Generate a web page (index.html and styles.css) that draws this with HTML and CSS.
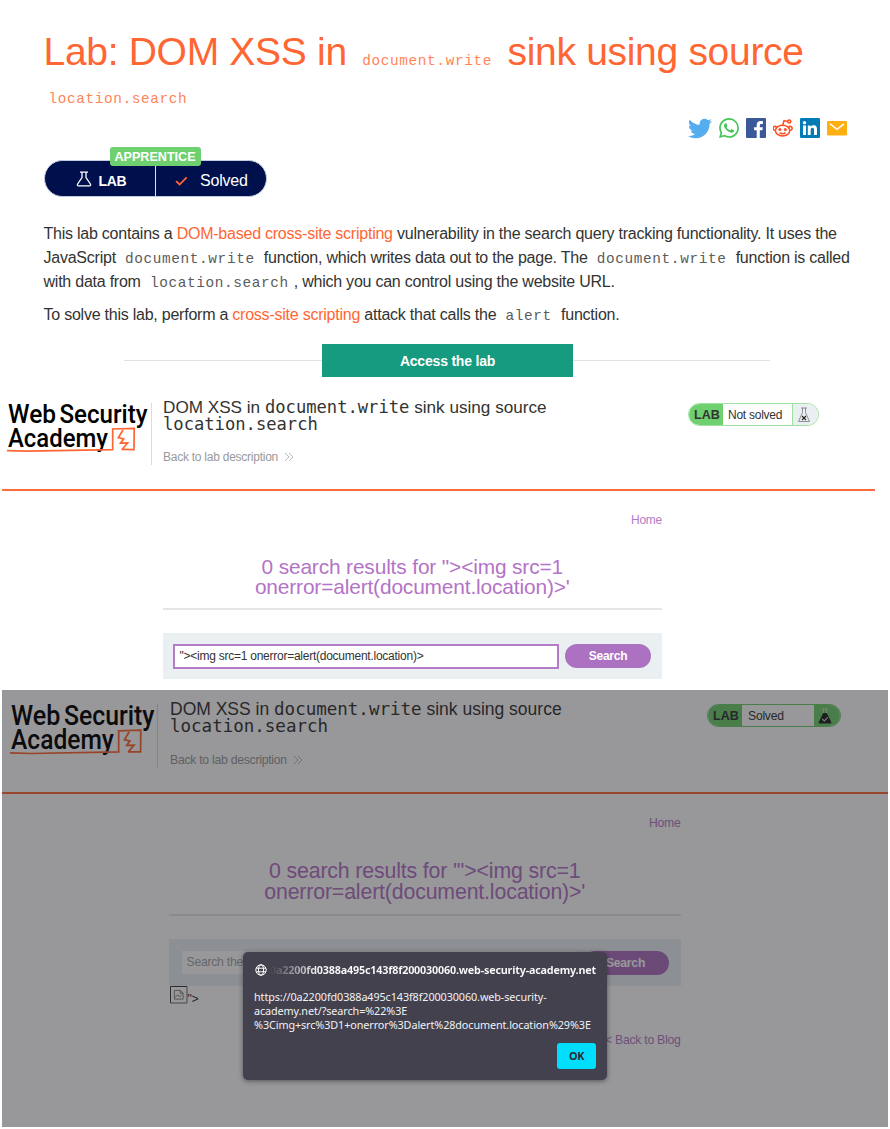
FILE: index.html
```html
<!DOCTYPE html>
<html lang="en">
<head>
<meta charset="utf-8">
<title>Lab: DOM XSS in document.write sink using source location.search</title>
<link rel="stylesheet" href="styles.css">
</head>
<body>
<section class="lab">
  <h1>Lab: DOM XSS in <code>document.write</code> sink using source<br><code>location.search</code></h1>
  <div class="share">
    <svg class="tw" viewBox="0 1.5 24 21"><path fill="#55acee" d="M23.953 4.57a10 10 0 01-2.825.775 4.958 4.958 0 002.163-2.723c-.951.555-2.005.959-3.127 1.184a4.92 4.92 0 00-8.384 4.482C7.69 8.095 4.067 6.13 1.64 3.162a4.822 4.822 0 00-.666 2.475c0 1.71.87 3.213 2.188 4.096a4.904 4.904 0 01-2.228-.616v.06a4.923 4.923 0 003.946 4.827 4.996 4.996 0 01-2.212.085 4.936 4.936 0 004.604 3.417 9.867 9.867 0 01-6.102 2.105c-.39 0-.779-.023-1.17-.067a13.995 13.995 0 007.557 2.209c9.053 0 13.998-7.496 13.998-13.985 0-.21 0-.42-.015-.63A9.935 9.935 0 0024 4.59z"/></svg>
    <svg viewBox="0 0 24 24"><path fill="#43c553" d="M17.472 14.382c-.297-.149-1.758-.867-2.03-.967-.273-.099-.471-.148-.67.15-.197.297-.767.966-.94 1.164-.173.199-.347.223-.644.075-.297-.15-1.255-.463-2.39-1.475-.883-.788-1.48-1.761-1.653-2.059-.173-.297-.018-.458.13-.606.134-.133.298-.347.446-.52.149-.174.198-.298.298-.497.099-.198.05-.371-.025-.52-.075-.149-.669-1.612-.916-2.207-.242-.579-.487-.5-.669-.51-.173-.008-.371-.01-.57-.01-.198 0-.52.074-.792.372-.272.297-1.04 1.016-1.04 2.479 0 1.462 1.065 2.875 1.213 3.074.149.198 2.096 3.2 5.077 4.487.709.306 1.262.489 1.694.625.712.227 1.36.195 1.871.118.571-.085 1.758-.719 2.006-1.413.248-.694.248-1.289.173-1.413-.074-.124-.272-.198-.57-.347m-5.421 7.403h-.004a9.87 9.87 0 01-5.031-1.378l-.361-.214-3.741.982.998-3.648-.235-.374a9.86 9.86 0 01-1.51-5.26c.001-5.45 4.436-9.884 9.888-9.884 2.64 0 5.122 1.03 6.988 2.898a9.825 9.825 0 012.893 6.994c-.003 5.45-4.437 9.884-9.885 9.884m8.413-18.297A11.815 11.815 0 0012.05 0C5.495 0 .16 5.335.157 11.892c0 2.096.547 4.142 1.588 5.945L.057 24l6.305-1.654a11.882 11.882 0 005.683 1.448h.005c6.554 0 11.89-5.335 11.893-11.893a11.821 11.821 0 00-3.48-8.413z"/></svg>
    <svg viewBox="0 0 20 20"><rect width="20" height="20" rx="1" fill="#3b5998"/><path fill="#fff" d="M13.8 20v-7.7h2.6l.4-3h-3V7.4c0-.9.3-1.5 1.5-1.5h1.6V3.2c-.3 0-1.2-.1-2.3-.1-2.3 0-3.9 1.4-3.9 4v2.2H8.1v3h2.6V20z"/></svg>
    <svg viewBox="0 0 20 20"><g fill="none" stroke="#ff4c1f" stroke-width="1.5"><ellipse cx="9.6" cy="12.6" rx="7.2" ry="5.4"/><path d="M3.6 9.4A1.900 1.900 0 1 0 1.900 12.200M15.600 9.400A1.900 1.900 0 1 1 17.300 12.200M9.800 7l1.200-4.400 4 1"/><circle cx="16.300" cy="3.600" r="1.500"/><path d="M6.600 14.600c1.700 1.300 4.400 1.300 6 0"/></g><circle cx="6.900" cy="11.400" r="1.500" fill="#ff4c1f"/><circle cx="12.300" cy="11.400" r="1.500" fill="#ff4c1f"/></svg>
    <svg viewBox="0 0 20 20"><rect width="20" height="20" rx="1.2" fill="#007bb5"/><path fill="#fff" d="M3 7.600h3V17H3zM7.800 7.600h2.800v1.300c.5-.9 1.500-1.600 2.900-1.600 3 0 3.500 2 3.500 4.500V17h-3v-4.700c0-1.100 0-2.500-1.500-2.500s-1.800 1.200-1.800 2.400V17h-2.900z"/><circle cx="4.500" cy="4.700" r="1.700" fill="#fff"/></svg>
    <svg viewBox="0 0 20 20"><rect y="3" width="20" height="14.400" rx="1.200" fill="#feb012"/><path fill="none" stroke="#fff" stroke-width="1.500" d="M3 5.800l7 5.600 7-5.600"/></svg>
  </div>
  <div class="status">
    <span class="level">APPRENTICE</span>
    <div class="status-lab">
      <svg class="flask" viewBox="0 0 16 16"><path d="M4 1.200h8M6 1.500v5L1.600 13c-.6 1 0 1.800.9 1.800h11c.9 0 1.500-.8.9-1.800L10 6.500v-5"/></svg>
      <b>LAB</b>
    </div>
    <div class="status-state">
      <svg class="tick" viewBox="0 0 14 10"><path d="M1.200 5.200l3.800 3.600 7.600-7.700"/></svg>
      <span>Solved</span>
    </div>
  </div>
  <p>This lab contains a <a>DOM-based cross-site scripting</a> vulnerability in the search query tracking functionality. It uses the<br>JavaScript <code>document.write</code> function, which writes data out to the page. The <code>document.write</code> function is called<br>with data from <code>location.search</code>, which you can control using the website URL.</p>
  <p>To solve this lab, perform a <a>cross-site scripting</a> attack that calls the <code>alert</code> function.</p>
  <div class="access"><span class="btn">Access the lab</span></div>
</section>

<section class="shot before">
  <header>
    <svg class="logo" viewBox="0 0 142 52">
      <text x="1" y="21" textLength="48" lengthAdjust="spacingAndGlyphs">Web</text>
      <text x="52.500" y="21" textLength="88" lengthAdjust="spacingAndGlyphs">Security</text>
      <text x="1" y="44.500" textLength="100" lengthAdjust="spacingAndGlyphs">Academy</text>
      <path d="M0 48.600L20 49.100L105.700 47.600L105.700 27L127.200 26.300L127 47.600L114.500 47.400"/>
      <path d="M116 28L111.300 35.700L116.600 37L113.500 41.200L120.600 41L115.400 47"/>
    </svg>
    <div class="title">
      <h2>DOM XSS in <code>document.write</code> sink using source<br><code>location.search</code></h2>
      <a>Back to lab description <svg class="chevs" viewBox="0 0 10 10"><path d="M1 1l4 4-4 4M5 1l4 4-4 4"/></svg></a>
    </div>
    <div class="pill">
      <b>LAB</b><span>Not solved</span>
      <i><svg viewBox="0 0 14 16"><path d="M4 1h6M5.500 1v4.500L1.500 14.500h11L8.500 5.500V1"/><path class="mark" d="M5 9l4 4M9 9l-4 4"/></svg></i>
    </div>
  </header>
  <main>
    <a class="home">Home</a>
    <h3>0 search results for "&gt;&lt;img src=1<br>onerror=alert(document.location)&gt;'</h3>
    <div class="search">
      <div class="field">"&gt;&lt;img src=1 onerror=alert(document.location)&gt;</div>
      <div class="go">Search</div>
    </div>
  </main>
</section>

<section class="shot after">
  <header>
    <svg class="logo" viewBox="0 0 142 52">
      <text x="1" y="21" textLength="48" lengthAdjust="spacingAndGlyphs">Web</text>
      <text x="52.500" y="21" textLength="88" lengthAdjust="spacingAndGlyphs">Security</text>
      <text x="1" y="44.500" textLength="100" lengthAdjust="spacingAndGlyphs">Academy</text>
      <path d="M0 48.600L20 49.100L105.700 47.600L105.700 27L127.200 26.300L127 47.600L114.500 47.400"/>
      <path d="M116 28L111.300 35.700L116.600 37L113.500 41.200L120.600 41L115.400 47"/>
    </svg>
    <div class="title">
      <h2>DOM XSS in <code>document.write</code> sink using source<br><code>location.search</code></h2>
      <a>Back to lab description <svg class="chevs" viewBox="0 0 10 10"><path d="M1 1l4 4-4 4M5 1l4 4-4 4"/></svg></a>
    </div>
    <div class="pill solved">
      <b>LAB</b><span>Solved</span>
      <i><svg viewBox="0 0 14 16"><path class="neck" d="M4.500 1h5M5.500 1v4.500h3V1"/><path class="full" d="M5.200 5h3.600l4.600 9.500q0 1-1 1H1.600q-1 0-1-1z"/><path class="check" d="M4.300 11l2 2 3.500-3.700"/></svg></i>
    </div>
  </header>
  <main>
    <a class="home">Home</a>
    <h3>0 search results for '"&gt;&lt;img src=1<br>onerror=alert(document.location)&gt;'</h3>
    <div class="search">
      <div class="field">Search the blog...</div>
      <div class="go">Search</div>
    </div>
    <div class="broken"><svg viewBox="0 0 18 18"><path class="frame" d="M.5 17.500V.500h17"/><path d="M17.500.5v17H.500"/><path class="pic" d="M4.500 4.500h6l3 3v6h-9zM10.500 4.500v3h3M5 12l3-3 2 2 2-1.500"/></svg>"&gt;</div>
    <a class="back">&lt; Back to Blog</a>
  </main>
  <div class="shade"></div>
  <div class="dialog">
    <div class="origin">
      <svg viewBox="0 0 12 12"><circle cx="6" cy="6" r="5.200"/><ellipse cx="6" cy="6" rx="2.500" ry="5.200"/><path d="M1.200 4.200h9.600M1.200 7.800h9.600"/></svg>
      <b>0a2200fd0388a495c143f8f200030060.web-security-academy.net</b>
    </div>
    <div class="message">https://0a2200fd0388a495c143f8f200030060.web-security-<br>academy.net/?search=%22%3E<br>%3Cimg+src%3D1+onerror%3Dalert%28document.location%29%3E</div>
    <div class="ok">OK</div>
  </div>
</section>
</body>
</html>
```
FILE: styles.css
```css
* { box-sizing: border-box; }
body {
  margin: 0;
  width: 890px;
  height: 1129px;
  overflow: hidden;
  background: #fff;
  color: #333332;
  font-family: "Liberation Sans", Arial, sans-serif;
}
svg { display: block; flex: none; }
h1, h2, h3, p { margin: 0; font-weight: 400; white-space: nowrap; }

/* Lab description */
.lab { height: 390px; padding: 32.5px 43px 0 43.5px; }
.lab h1 { font-size: 39px; letter-spacing: -.3px; line-height: 38.7px; height: 77.5px; color: #ff6633; }
.lab code {
  padding: 0 5px;
  font: 14.4px/1 "Liberation Mono", monospace;
  letter-spacing: .62px;
}
.lab h1 code { color: #ff8559; }
.lab p code { color: #5c5c5c; }
.share { display: flex; justify-content: flex-end; align-items: center; gap: 7px; height: 20px; margin-top: 8px; }
.share svg { width: 20px; height: 20px; }
.share .tw { width: 24px; height: 21px; }
.status {
  position: relative;
  display: flex;
  width: 223px;
  height: 37px;
  margin-top: 22px;
  border: 1px solid #c3cbdc;
  border-radius: 19px;
  background: #00104d;
  color: #fff;
}
.level {
  position: absolute;
  left: 65px;
  top: -14px;
  width: 91px;
  height: 19px;
  border-radius: 3px;
  background: #6fd070;
  font: bold 12.6px/20px "Liberation Sans", sans-serif;
  text-align: center;
}
.status-lab { display: flex; align-items: center; width: 111px; padding: 5px 0 0 31px; border-right: 1px solid #e0e3ee; font-size: 14px; letter-spacing: -.3px; }
.status-lab b { margin-left: 7px; }
.flask { width: 16px; height: 16px; margin-top: -4px; fill: none; stroke: #fff; stroke-width: 1.3; }
.status-state { display: flex; align-items: center; padding: 4px 0 0 19.5px; font-size: 16px; letter-spacing: -.2px; }
.tick { width: 13px; height: 10px; margin-right: 12px; fill: none; stroke: #ff6633; stroke-width: 2; }
.lab p { height: 71.5px; font-size: 16px; letter-spacing: -.235px; line-height: 23.8px; }
.lab p a { color: #ff6633; }
.status + p { margin-top: 25px; }
.lab p + p { margin-top: 9px; height: 24px; }
.access { display: flex; align-items: center; justify-content: center; width: 646px; height: 33px; margin: 17px 0 0 80.5px; background: linear-gradient(#e1e1e1, #e1e1e1) 0 16px / 100% 1px no-repeat; }
.btn { width: 251px; height: 33px; background: #169b80; color: #fff; font-weight: bold; font-size: 14px; letter-spacing: -.2px; line-height: 34px; text-align: center; margin-right: -1px; }

/* Lab site */
.shot { position: relative; margin-left: 2px; background: #fff; letter-spacing: -.25px; }
.shot header { display: flex; border-bottom: 2px solid #ff6b3a; }
.before { width: 873px; height: 300px; font-size: 12px; }
.before header { height: 100.5px; padding: 12px 0 0 5px; }
.after { width: 886px; height: 437px; font-size: 12.2px; overflow: hidden; }
.after header { height: 103.5px; padding: 12px 0 0 7.5px; }
.logo { width: 142px; height: 52px; overflow: visible; fill: none; stroke: #ff6633; stroke-width: 1.7; }
.after .logo { width: 146px; height: 53.5px; margin-top: 1px; }
.logo text { font: 500 26px Roboto, sans-serif; letter-spacing: 0; fill: #000; stroke: none; }
.title { height: 62px; margin: 1px 0 0 2px; padding-left: 11px; border-left: 1px solid #dcdcdc; line-height: 1; }
.after .title { margin: 2px 0 0 1.5px; padding-left: 12px; height: 63px; }
.title h2 { margin-top: -4px; font-size: 17.15px; letter-spacing: 0; line-height: 17.3px; }
.after h2 { margin-top: -3.5px; font-size: 17.5px; line-height: 17.8px; }
.title code { font-family: "DejaVu Sans Mono", monospace; font-size: 1em; line-height: 1; }
.title a { display: flex; gap: 6px; margin-top: 17.5px; color: #999; }
.chevs { width: 10px; height: 10px; margin-top: 1px; fill: none; stroke: #aaa; stroke-width: .8; }
.pill { display: flex; width: 131px; height: 23px; margin: 1px 56px 0 auto; border: 1px solid #9fe0a0; border-radius: 12px; overflow: hidden; line-height: 22px; }
.pill b { width: 34px; padding-left: 5px; background: #6fd070; font-size: 12.5px; letter-spacing: 0; }
.pill span { flex: 1; padding-left: 5px; }
.pill i { width: 26px; padding: 3px 0 0 3.5px; border-left: 1px solid #9fe0a0; background: #eaeff2; }
.pill svg { width: 14px; height: 16px; fill: none; stroke: #777; stroke-width: .8; }
.pill .mark { stroke: #222; stroke-width: 1.1; }
.pill.solved { width: 134px; margin: 2px 47px 0 auto; border-color: #6fd070; }
.solved span { padding-left: 6px; }
.solved i { background: #6fd070; border: 0; }
.solved .neck { stroke: #ddd; }
.solved .full { fill: #222; stroke: none; }
.solved .check { stroke: #ccc; stroke-width: 1.2; }
.shot main { display: flex; flex-direction: column; width: 499.5px; margin-left: 160.5px; }
.after main { width: 511.5px; margin-left: 167px; }
.home, .back { align-self: flex-end; color: #b27cc6; line-height: 13px; }
.home { margin-top: 23px; }
.shot h3 { margin-top: 29.5px; height: 54px; padding-top: .5px; border-bottom: 2px solid #e6e6e6; color: #b373c6; font-size: 20.9px; letter-spacing: -.15px; line-height: 20.3px; text-align: center; }
.after h3 { height: 56.5px; padding-top: 2px; font-size: 21.3px; line-height: 20.7px; }
.search { display: flex; align-items: center; gap: 6px; height: 46px; margin-top: 23px; padding: 0 11px 0 10.5px; background: #eaeff2; }
.field { flex: 1; height: 25px; padding-left: 4.5px; border: 2px solid #b47bc8; background: #fff; line-height: 21px; }
.go { width: 86px; height: 24px; border-radius: 12px; background: #ad71c1; color: #fff; font-weight: bold; text-align: center; line-height: 24px; }
.after .search { height: 47px; margin-top: 23.5px; padding: 0 12px 0 12.5px; }
.after .field { height: 23px; border: 0; color: #a5a5a5; line-height: 23px; padding-left: 5px; }
.broken { display: flex; height: 18px; margin-left: 1px; line-height: 27px; }
.broken svg { width: 17.5px; height: 17.5px; fill: none; stroke: #666; }
.broken .frame { stroke: #333; }
.broken .pic { stroke-width: .8; }
.back { margin-top: 29.5px; }
.shade { position: absolute; inset: 0; background: rgba(27, 27, 31, .45); }

/* Browser alert */
.dialog {
  position: absolute;
  left: 241px;
  top: 262px;
  width: 364px;
  height: 128px;
  padding: 11px;
  border-radius: 5px;
  background: #42414d;
  box-shadow: 0 1px 5px rgba(0, 0, 0, .45);
  color: #f2f2f5;
  font: 10.8px/13.8px "Noto Sans", sans-serif;
  white-space: nowrap;
}
.origin { display: flex; align-items: center; justify-content: space-between; height: 14px; }
.origin svg { width: 12px; height: 12px; margin-left: 1px; fill: none; stroke: #fff; stroke-width: 1; }
.origin b { letter-spacing: -.2px; background: linear-gradient(90deg, #42414d 0, #fbfbfe 50px); background-clip: text; -webkit-background-clip: text; color: transparent; }
.message { margin-top: 13px; letter-spacing: -.09px; }
.ok { width: 39px; height: 26px; margin: 12px 0 0 auto; border-radius: 3px; background: #00ddff; color: #2b2a33; font-weight: bold; line-height: 26px; text-align: center; }
```
